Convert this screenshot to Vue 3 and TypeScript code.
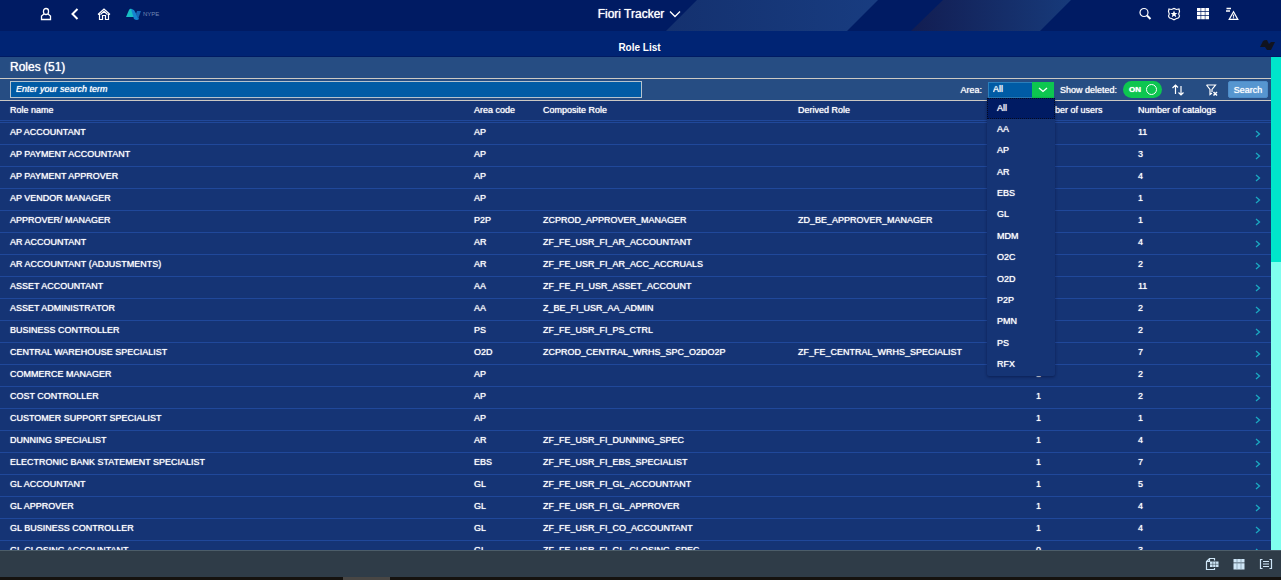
<script setup lang="ts">
import { ref } from 'vue'

interface Role {
  name: string
  area: string
  composite?: string
  derived?: string
  users: number
  catalogs: number
}

const search = ref('')
const area = ref('All')
const showDeleted = ref(true)

const areas = ['All', 'AA', 'AP', 'AR', 'EBS', 'GL', 'MDM', 'O2C', 'O2D', 'P2P', 'PMN', 'PS', 'RFX']

const roles: Role[] = [
  { name: 'AP ACCOUNTANT', area: 'AP', users: 1, catalogs: 11 },
  { name: 'AP PAYMENT ACCOUNTANT', area: 'AP', users: 1, catalogs: 3 },
  { name: 'AP PAYMENT APPROVER', area: 'AP', users: 1, catalogs: 4 },
  { name: 'AP VENDOR MANAGER', area: 'AP', users: 1, catalogs: 1 },
  { name: 'APPROVER/ MANAGER', area: 'P2P', composite: 'ZCPROD_APPROVER_MANAGER', derived: 'ZD_BE_APPROVER_MANAGER', users: 1, catalogs: 1 },
  { name: 'AR ACCOUNTANT', area: 'AR', composite: 'ZF_FE_USR_FI_AR_ACCOUNTANT', users: 1, catalogs: 4 },
  { name: 'AR ACCOUNTANT (ADJUSTMENTS)', area: 'AR', composite: 'ZF_FE_USR_FI_AR_ACC_ACCRUALS', users: 1, catalogs: 2 },
  { name: 'ASSET ACCOUNTANT', area: 'AA', composite: 'ZF_FE_FI_USR_ASSET_ACCOUNT', users: 1, catalogs: 11 },
  { name: 'ASSET ADMINISTRATOR', area: 'AA', composite: 'Z_BE_FI_USR_AA_ADMIN', users: 1, catalogs: 2 },
  { name: 'BUSINESS CONTROLLER', area: 'PS', composite: 'ZF_FE_USR_FI_PS_CTRL', users: 1, catalogs: 2 },
  { name: 'CENTRAL WAREHOUSE SPECIALIST', area: 'O2D', composite: 'ZCPROD_CENTRAL_WRHS_SPC_O2DO2P', derived: 'ZF_FE_CENTRAL_WRHS_SPECIALIST', users: 1, catalogs: 7 },
  { name: 'COMMERCE MANAGER', area: 'AP', users: 1, catalogs: 2 },
  { name: 'COST CONTROLLER', area: 'AP', users: 1, catalogs: 2 },
  { name: 'CUSTOMER SUPPORT SPECIALIST', area: 'AP', users: 1, catalogs: 1 },
  { name: 'DUNNING SPECIALIST', area: 'AR', composite: 'ZF_FE_USR_FI_DUNNING_SPEC', users: 1, catalogs: 4 },
  { name: 'ELECTRONIC BANK STATEMENT SPECIALIST', area: 'EBS', composite: 'ZF_FE_USR_FI_EBS_SPECIALIST', users: 1, catalogs: 7 },
  { name: 'GL ACCOUNTANT', area: 'GL', composite: 'ZF_FE_USR_FI_GL_ACCOUNTANT', users: 1, catalogs: 5 },
  { name: 'GL APPROVER', area: 'GL', composite: 'ZF_FE_USR_FI_GL_APPROVER', users: 1, catalogs: 4 },
  { name: 'GL BUSINESS CONTROLLER', area: 'GL', composite: 'ZF_FE_USR_FI_CO_ACCOUNTANT', users: 1, catalogs: 4 },
  { name: 'GL CLOSING ACCOUNTANT', area: 'GL', composite: 'ZF_FE_USR_FI_GL_CLOSING_SPEC', users: 0, catalogs: 3 },
]
</script>

<template>
  <div class="app">
    <header class="shell">
      <svg class="stripes" width="420" height="31" viewBox="0 0 420 31" aria-hidden="true">
        <defs>
          <linearGradient id="band-a" x1="0" x2="1"><stop offset="0" stop-color="#14316f" /><stop offset="1" stop-color="#183c80" /></linearGradient>
          <linearGradient id="band-b" x1="0" x2="1"><stop offset="0" stop-color="#121d52" /><stop offset="1" stop-color="#173a7a" /></linearGradient>
        </defs>
        <polygon points="31,0 212,0 181,31 0,31" fill="url(#band-a)" />
        <polygon points="277,0 405,0 374,31 245,31" fill="url(#band-b)" />
      </svg>
      <nav class="shell-side left">
        <button class="icon" aria-label="User">
          <svg width="12" height="14" viewBox="0 0 12 14"><path d="M6 1.500A2.500 2.500 0 0 1 8.500 4V5A2.500 2.500 0 0 1 3.500 5V4A2.500 2.500 0 0 1 6 1.500ZM4 7 1.500 9V12.500H10.500V9L8 7" stroke-width="1.300" /></svg>
        </button>
        <button class="icon" aria-label="Back">
          <svg width="12" height="14" viewBox="0 0 12 14"><path d="M8.500 2 3.500 7 8.500 12" stroke-width="2" /></svg>
        </button>
        <button class="icon" aria-label="Home">
          <svg width="14" height="14" viewBox="0 0 14 14"><path d="M1 7.500 7 2 13 7.500M2.500 7V12.500H5.500V8.500H8.500V12.500H11.500V7M3.500 7.500 7 4.300 10.500 7.500" stroke-width="1.200" /></svg>
        </button>
        <a class="brand" href="#" aria-label="NYPE">
          <svg width="16" height="13" viewBox="0 0 16 13"><path d="M0 9 3 2Q4 0 6 1L9 6 8 9Z" fill="#18bfc4" /><path d="M5 1 8 2 13 11Q11 13 8 11Z" fill="#1584cf" /><path d="M10 6 11 3H15L12 11Z" fill="#1766b5" /></svg>
          <span>NYPE</span>
        </a>
      </nav>
      <button class="title">Fiori Tracker
        <svg width="12" height="8" viewBox="0 0 12 8"><path d="M1 1.500 6 6.500 11 1.500" stroke-width="1.300" /></svg>
      </button>
      <nav class="shell-side right">
        <button class="icon" aria-label="Search">
          <svg width="14" height="14" viewBox="0 0 14 14"><circle cx="6" cy="5.500" r="4" stroke-width="1.200" /><path d="M9 8.500 12.500 12" stroke-width="2" /></svg>
        </button>
        <button class="icon" aria-label="Favourites">
          <svg width="14" height="14" viewBox="0 0 14 14"><path d="M2 2 4.500 2.500 7 1.500 9.500 2.500 12 2 12.500 4.500Q11 7 12.500 9 12 11.500 9.500 11.500L7 12.800 4.500 11.500Q2 11.500 1.500 9 3 7 1.500 4.500Z" stroke-width="1.200" /><path d="m7 3.500 1 2.500h2.500l-2 1.600.8 2.600L7 8.700l-2.300 1.500.8-2.600-2-1.600H6Z" class="solid" /></svg>
        </button>
        <button class="icon" aria-label="Apps">
          <svg width="14" height="14" viewBox="0 0 14 14"><path class="solid" d="M1 1h3.600v3.300H1zM5.200 1h3.600v3.300H5.200zM9.400 1H13v3.300H9.400zM1 5h3.600v3.300H1zM5.200 5h3.600v3.300H5.200zM9.400 5H13v3.300H9.400zM1 9h3.600v3.300H1zM5.200 9h3.600v3.300H5.200zM9.400 9H13v3.300H9.400z" /></svg>
        </button>
        <button class="icon" aria-label="Warnings">
          <svg width="14" height="14" viewBox="0 0 14 14"><path d="M1.500 1.500H6M1 4H5" stroke-width="1.300" /><path d="M8.500 4.800 4.200 12.400H12.800ZM8.500 7.500V9.700M8.500 10.300V11.300" stroke-width="1.200" /></svg>
        </button>
      </nav>
    </header>

    <div class="page-title">
      <h1>Role List</h1>
      <svg class="mark" width="15" height="11" viewBox="0 0 15 11" aria-hidden="true"><path d="M0 7 3 1Q4 0 7 0L9 4 11 2H15L11 10H7L5 7Z" fill="#10131f" /></svg>
    </div>

    <main class="content">
      <div class="list">
        <h2>Roles (51)</h2>
        <form class="filters" @submit.prevent>
          <input v-model="search" class="search" type="text" placeholder="Enter your search term" aria-label="Search term" />
          <div class="tools">
            <label for="area">Area:</label>
            <div class="combo">
              <select id="area" v-model="area">
                <option v-for="a in areas" :key="a">{{ a }}</option>
              </select>
              <span class="arrow"><svg width="10" height="6" viewBox="0 0 10 6"><path d="M1 1 5 4.500 9 1" stroke-width="1.300" /></svg></span>
              <ul class="menu" role="listbox" aria-label="Area">
                <li v-for="a in areas" :key="a" role="option" :aria-selected="a === area" :class="{ selected: a === area }" @click="area = a">{{ a }}</li>
              </ul>
            </div>
            <label class="deleted" for="deleted">Show deleted:</label>
            <span class="switch">
              <input id="deleted" v-model="showDeleted" type="checkbox" role="switch" />
              <span class="state">{{ showDeleted ? 'ON' : 'OFF' }}</span>
              <span class="knob"></span>
            </span>
            <button class="tool sort" type="button" aria-label="Sort">
              <svg width="14" height="14" viewBox="0 0 14 14"><path d="M4.500 11V2M1.500 5 4.500 2 7 4.500M10 3V12M7.500 9.500 10 12 12.500 9.500" stroke-width="1.200" /></svg>
            </button>
            <button class="tool clear" type="button" aria-label="Clear filter">
              <svg width="14" height="14" viewBox="0 0 14 14"><path d="M1.500 2H10.500L7 6.500V9M1.500 2 5 6.500V11.500L7 10" stroke-width="1.200" /><path d="M8.500 9 12 12.500M12 9 8.500 12.500" stroke-width="1.500" /></svg>
            </button>
            <button class="go" type="submit">Search</button>
          </div>
        </form>
        <table>
          <colgroup>
            <col /><col class="c-area" /><col class="c-comp" /><col class="c-der" /><col class="c-users" /><col class="c-cat" /><col class="c-nav" />
          </colgroup>
          <thead>
            <tr><th>Role name</th><th>Area code</th><th>Composite Role</th><th>Derived Role</th><th>Number of users</th><th>Number of catalogs</th><th></th></tr>
          </thead>
          <tbody>
            <tr v-for="r in roles" :key="r.name">
              <td>{{ r.name }}</td>
              <td>{{ r.area }}</td>
              <td>{{ r.composite }}</td>
              <td>{{ r.derived }}</td>
              <td class="count">{{ r.users }}</td>
              <td>{{ r.catalogs }}</td>
              <td class="nav"><svg width="6" height="8" viewBox="0 0 6 8"><path d="M1 1 4.500 4 1 7" stroke-width="1.300" /></svg></td>
            </tr>
          </tbody>
        </table>
      </div>
      <div class="scroll"><div class="thumb"></div></div>
    </main>

    <footer class="actions">
      <button class="icon" aria-label="Export">
        <svg width="14" height="14" viewBox="0 0 14 14"><path d="M9.500 3.500V1.500H4.500L1.500 4.500V12.500H9.500V11M4.500 1.500V4.500H1.500" stroke-width="1.200" /><path class="solid" d="M5 4.500h8.500v5.500H5z" /><path d="M5 7.300H13.500M7.800 4.500V10M10.600 4.500V10" stroke="#2f3c48" stroke-width=".5" /></svg>
      </button>
      <button class="icon" aria-label="Table">
        <svg width="14" height="14" viewBox="0 0 14 14"><path class="solid" d="M1.500 2h11v3.500h-11zM1.500 6.300h11V12.500h-11z" /><path d="M5 2V12.500M9 2V12.500" stroke="#7d95a8" stroke-width=".7" /></svg>
      </button>
      <button class="icon" aria-label="List">
        <svg width="14" height="14" viewBox="0 0 14 14"><path d="M3.500 2.500H1.500V11.500H3.500M10.500 2.500H12.500V11.500H10.500M4 4.500H10M4 7H10M4 9.500H10" stroke-width="1.200" /></svg>
      </button>
    </footer>
    <div class="edge"><span></span></div>
  </div>
</template>

<style>
body {
  background: #15171c;
}
</style>

<style scoped>
* {
  box-sizing: border-box;
}
.app {
  display: flex;
  flex-direction: column;
  height: 100vh;
  overflow: hidden;
  color: #fff;
  font: 9px/12px "Liberation Sans", Arial, sans-serif;
  text-shadow: 0 0 1px #fff;
}
button {
  padding: 0;
  border: 0;
  background: none;
  color: inherit;
  font: inherit;
  text-shadow: inherit;
}
svg {
  display: block;
  fill: none;
  stroke: currentColor;
}
.solid {
  fill: currentColor;
  stroke: none;
}
.shell {
  position: relative;
  display: grid;
  grid-template-columns: 1fr auto 1fr;
  align-items: center;
  flex: 0 0 31px;
  padding: 0 2px 3px 0;
  background: #001b63;
}
.stripes {
  position: absolute;
  left: 52%;
  top: 0;
  stroke: none;
}
.shell-side {
  position: relative;
  display: flex;
  align-items: center;
  gap: 15px;
}
.left {
  padding-left: 39px;
}
.right {
  justify-content: flex-end;
  padding-right: 40px;
}
.icon {
  display: grid;
  place-items: center;
  width: 14px;
  height: 14px;
}
.brand {
  display: flex;
  align-items: center;
  gap: 1px;
  color: #7389b5;
  font-size: 6px;
  text-decoration: none;
  text-shadow: none;
}
.brand svg {
  stroke: none;
}
.title {
  position: relative;
  display: flex;
  align-items: center;
  gap: 5px;
  font-size: 12px;
  line-height: 16px;
}
.page-title {
  display: grid;
  grid-template-columns: 1fr auto 1fr;
  flex: 0 0 26px;
  align-items: center;
  padding-right: 2px;
  border-bottom: 1px solid #001b63;
  background: #002474;
}
h1 {
  grid-column: 2;
  margin: 8px 0 0;
  font-size: 10px;
  line-height: 14px;
  text-shadow: none;
}
.mark {
  justify-self: end;
  margin: 3px 4px 0 0;
  stroke: none;
}
.content {
  display: flex;
  flex: 1;
  min-height: 0;
}
.list {
  flex: 1;
  min-width: 0;
  overflow: hidden;
  background: #153475;
}
h2 {
  margin: 0;
  padding: 0 10px;
  background: #264d83;
  font-size: 12px;
  font-weight: 400;
  line-height: 21px;
}
.filters {
  display: flex;
  align-items: center;
  justify-content: space-between;
  height: 23px;
  padding: 0 3px 0 10px;
  border: solid #ccc9c4;
  border-width: 1px 0;
  background: #264d83;
}
.search {
  width: calc(50% + 3px);
  height: 17px;
  padding: 0 5px 1px;
  border: 1px solid #b5c3ce;
  border-radius: 0;
  background: #005ba5;
  color: #fff;
  font: inherit;
  text-shadow: inherit;
}
.search::placeholder {
  color: #fff;
  font-style: italic;
  opacity: 1;
}
.tools {
  display: flex;
  align-items: center;
}
.combo {
  position: relative;
  display: flex;
  width: 66px;
  height: 16px;
  margin: 0 6px;
}
.combo select {
  width: 100%;
  padding: 0 4px 1px;
  border: 1px solid #2b7fbc;
  border-radius: 0;
  appearance: none;
  background: #005ba5;
  color: #fff;
  font: inherit;
  text-shadow: inherit;
}
.arrow {
  position: absolute;
  right: 0;
  top: 0;
  display: grid;
  place-items: center;
  width: 22px;
  height: 16px;
  background: #0dc650;
  pointer-events: none;
}
.menu {
  position: absolute;
  left: -1px;
  top: 16px;
  z-index: 2;
  display: grid;
  grid-auto-rows: 1fr;
  width: 68px;
  height: 278px;
  margin: 0;
  padding: 0;
  border-radius: 0 0 2px 2px;
  background: #153475;
  box-shadow: 0 1px 3px rgba(0, 10, 50, 0.5);
  list-style: none;
}
.menu li {
  padding: 0 10px;
  line-height: 20px;
}
.menu .selected {
  outline: 1px dotted #050a20;
  outline-offset: -1px;
  background: #001b63;
}
.switch {
  position: relative;
  display: flex;
  align-items: center;
  justify-content: space-between;
  width: 39px;
  height: 17px;
  margin-left: 6px;
  padding: 0 5px 0 6px;
  border-radius: 9px;
  background: #0dc650;
}
.switch input {
  position: absolute;
  inset: 0;
  width: 100%;
  height: 100%;
  margin: 0;
  opacity: 0;
}
.state {
  font-size: 8px;
  font-weight: 700;
}
.knob {
  width: 11px;
  height: 11px;
  border: 1px solid #fff;
  border-radius: 50%;
}
.tool {
  width: 14px;
  height: 14px;
}
.sort {
  margin-left: 9px;
}
.clear {
  margin: 0 9px 0 20px;
}
.go {
  width: 40px;
  height: 17px;
  border: 1px solid #4d8cc8;
  border-radius: 2px;
  background: #5696d0;
}
table {
  width: 100%;
  border-collapse: separate;
  border-spacing: 0;
  table-layout: fixed;
}
.c-area { width: 69px; }
.c-comp { width: 255px; }
.c-der { width: 238px; }
.c-users { width: 102px; }
.c-cat { width: 107px; }
.c-nav { width: 26px; }
th,
td {
  height: 22px;
  padding: 0 0 3px;
  border-bottom: 1px solid #20489a;
  font-weight: 400;
  line-height: 12px;
  text-align: left;
  white-space: nowrap;
}
th {
  padding-bottom: 2px;
  border-bottom: 3px double #20489a;
}
th:first-child,
td:first-child {
  padding-left: 10px;
}
.nav {
  padding: 0 0 0 10px;
  color: #1ba9c2;
}
.scroll {
  flex: 0 0 10px;
  background: #7fffee;
}
.thumb {
  height: calc(42% - 2px);
  background: #00e5cb;
}
.actions {
  display: flex;
  align-items: center;
  justify-content: flex-end;
  gap: 13px;
  flex: 0 0 27px;
  padding-right: 8px;
  border-top: 1px solid #4c5d69;
  background: #2f3c48;
  color: #cfe6f7;
}
.edge {
  flex: 0 0 3px;
  padding-left: 343px;
  background: #15120f;
}
.edge span {
  display: block;
  width: 47px;
  height: 3px;
  background: #484644;
}
</style>
